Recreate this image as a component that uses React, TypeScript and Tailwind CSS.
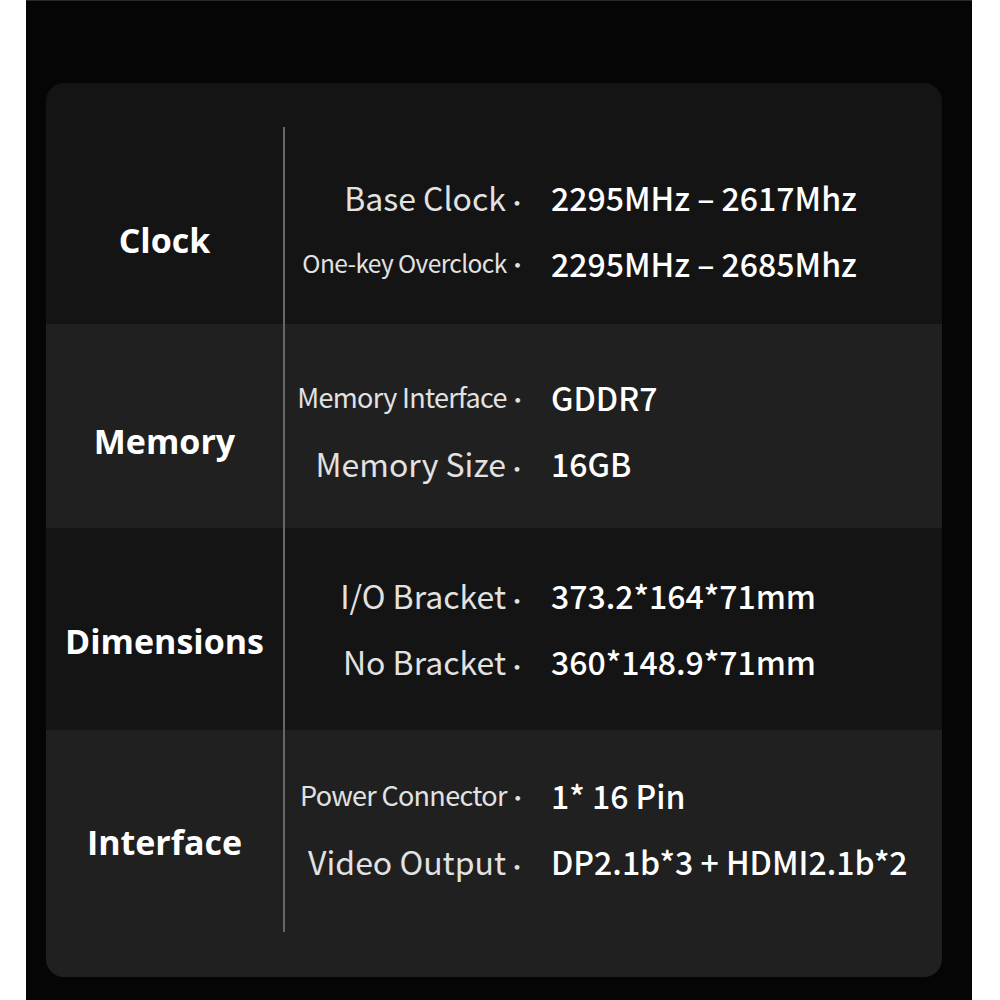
const sub = "font-['Noto_Sans_CJK_SC','Noto_Sans',sans-serif]";
const head = "font-['Open_Sans','Noto_Sans',sans-serif]";

type Spec = { label: string; size: string; value: string };

type Group = {
  title: string;
  bg: string;
  height: string;
  titlePad: string;
  cellClass: string;
  specs: Spec[];
};

const groups: Group[] = [
  {
    title: "Clock",
    bg: "bg-[#141414]",
    height: "h-[241px]",
    titlePad: "pt-[137px]",
    cellClass: "mt-[44px] pt-[37px]",
    specs: [
      { label: "Base Clock", size: "text-[32px]", value: "2295MHz – 2617Mhz" },
      { label: "One-key Overclock", size: "text-[24.5px] tracking-[-0.6px]", value: "2295MHz – 2685Mhz" },
    ],
  },
  {
    title: "Memory",
    bg: "bg-[#202020]",
    height: "h-[204px]",
    titlePad: "pt-[97px]",
    cellClass: "pt-[40px]",
    specs: [
      { label: "Memory Interface", size: "text-[27px] tracking-[-0.7px]", value: "GDDR7" },
      { label: "Memory Size", size: "text-[32px]", value: "16GB" },
    ],
  },
  {
    title: "Dimensions",
    bg: "bg-[#141414]",
    height: "h-[202px]",
    titlePad: "pt-[93px]",
    cellClass: "pt-[34px]",
    specs: [
      { label: "I/O Bracket", size: "text-[32px]", value: "373.2*164*71mm" },
      { label: "No Bracket", size: "text-[32px]", value: "360*148.9*71mm" },
    ],
  },
  {
    title: "Interface",
    bg: "bg-[#202020]",
    height: "h-[247px]",
    titlePad: "pt-[92px]",
    cellClass: "pt-[32px] mb-[45px]",
    specs: [
      { label: "Power Connector", size: "text-[27px] tracking-[-0.7px]", value: "1* 16 Pin" },
      { label: "Video Output", size: "text-[32px]", value: "DP2.1b*3 + HDMI2.1b*2" },
    ],
  },
];

function SpecRow({ label, size, value }: Spec) {
  return (
    <div className="flex h-[66px] items-center">
      <div className={`w-[236px] shrink-0 text-right text-[#e2e2e2] ${sub} ${size}`}>
        {label}
        <span className="mr-[-7px] text-[22px]">·</span>
      </div>
      <div className={`pl-[30px] text-[32px] font-medium text-white ${sub}`}>{value}</div>
    </div>
  );
}

export default function App() {
  return (
    <div className="min-h-[1000px] w-[1000px] bg-white">
      <div className="ml-[26px] h-[1000px] w-[946px] border-t border-[#2a2a2a] bg-[#050505] pt-[82px]">
        <div className="ml-[20px] w-[896px] overflow-hidden rounded-[18px]">
          {groups.map((g) => (
            <div key={g.title} className={`flex ${g.bg} ${g.height}`}>
              <div className={`w-[237px] shrink-0 text-center ${g.titlePad}`}>
                <span className={`text-[34px] leading-[40px] font-bold text-white ${head}`}>{g.title}</span>
              </div>
              <div className={`flex-1 border-l-2 border-[#666666] ${g.cellClass}`}>
                {g.specs.map((s) => (
                  <SpecRow key={s.label} {...s} />
                ))}
              </div>
            </div>
          ))}
        </div>
      </div>
    </div>
  );
}
